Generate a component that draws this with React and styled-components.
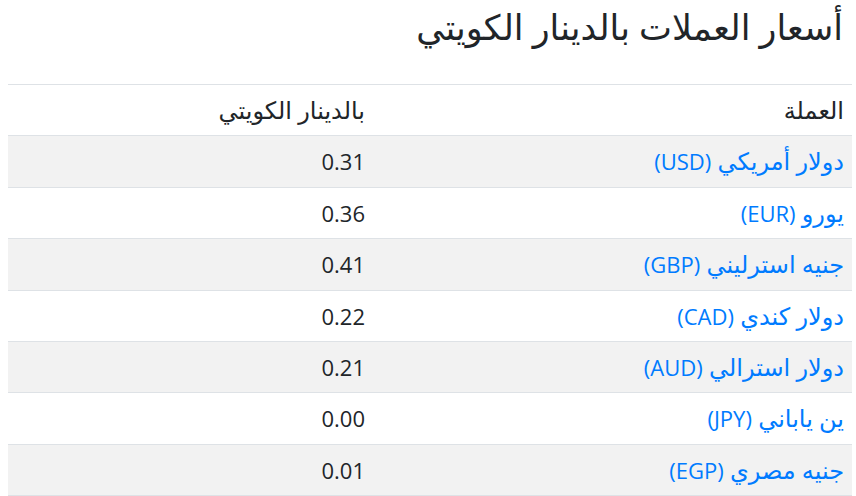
import React from "react";
import styled, { createGlobalStyle } from "styled-components";

const Global = createGlobalStyle`
  html, body { margin: 0; padding: 0; background: #fff; }
  body {
    font-family: "Open Sans", "DejaVu Sans", sans-serif;
    color: #212529;
    direction: rtl;
  }
`;

const Page = styled.div`
  padding: 0 4px 0 8px;
`;

const Title = styled.h2`
  margin: 0;
  padding: 6px 9px 0 0;
  height: 84px;
  box-sizing: border-box;
  font-size: 35px;
  font-weight: 500;
  line-height: 1.2;
  color: #212529;
`;

const Table = styled.table`
  width: 100%;
  border-collapse: collapse;
  line-height: 26.4px;
`;

const HeadCell = styled.th`
  box-sizing: border-box;
  text-align: right;
  font-weight: 400;
  font-size: 24px;
  padding: 12px 8px;
  border-top: 1px solid #dee2e6;
  border-bottom: 1px solid #dee2e6;
  width: ${(p) => p.$w || "auto"};
`;

const Row = styled.tr`
  background: ${(p) => (p.$striped ? "#f2f2f2" : "#fff")};
`;

const Cell = styled.td`
  text-align: right;
  font-size: ${(p) => (p.$arabic ? "24px" : "22px")};
  padding: 12px 8px;
  border-bottom: 1px solid #dee2e6;
`;

const CurrencyLink = styled.a`
  color: #007bff;
  text-decoration: none;
`;

const Code = styled.span`
  font-size: 22px;
  line-height: 1;
`;

const rates = [
  ["دولار أمريكي", "USD", "0.31"],
  ["يورو", "EUR", "0.36"],
  ["جنيه استرليني", "GBP", "0.41"],
  ["دولار كندي", "CAD", "0.22"],
  ["دولار استرالي", "AUD", "0.21"],
  ["ين ياباني", "JPY", "0.00"],
  ["جنيه مصري", "EGP", "0.01"],
];

export default function App() {
  return (
    <Page>
      <Global />
      <Title>أسعار العملات بالدينار الكويتي</Title>
      <Table>
        <thead>
          <tr>
            <HeadCell $w="479px">العملة</HeadCell>
            <HeadCell>بالدينار الكويتي</HeadCell>
          </tr>
        </thead>
        <tbody>
          {rates.map(([name, code, value], i) => (
            <Row key={code} $striped={i % 2 === 0}>
              <Cell $arabic>
                <CurrencyLink href="#">
                  {name} <Code>({code})</Code>
                </CurrencyLink>
              </Cell>
              <Cell>{value}</Cell>
            </Row>
          ))}
        </tbody>
      </Table>
    </Page>
  );
}
